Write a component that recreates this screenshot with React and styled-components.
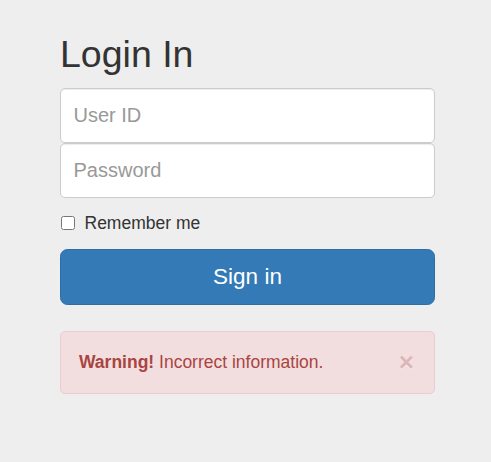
import React from "react";
import styled, { createGlobalStyle } from "styled-components";

const Global = createGlobalStyle`
  html, body {
    margin: 0;
    padding: 0;
    background: #eeeeee;
  }
  body {
    font-family: "Liberation Sans", Arial, Helvetica, sans-serif;
    color: #333333;
  }
  * { box-sizing: border-box; }
`;

const Page = styled.div`
  min-height: 462px;
  padding: 34px 0 0 60px;
`;

const Form = styled.form`
  width: 375px;
  display: flex;
  flex-direction: column;
`;

const Heading = styled.h2`
  margin: 0 0 13px;
  font-size: 37.5px;
  line-height: 41px;
  font-weight: 500;
  color: #333333;
`;

const Input = styled.input`
  display: block;
  width: 100%;
  height: 55px;
  margin: 0;
  padding: 0 12.5px;
  font-family: inherit;
  font-size: 20px;
  color: #555555;
  background: #ffffff;
  border: 1px solid #cccccc;
  border-radius: 5px;
  box-shadow: inset 0 1px 1px rgba(0, 0, 0, 0.075);
  outline: none;
  &::placeholder {
    color: #999999;
  }
`;

const CheckRow = styled.label`
  display: flex;
  align-items: center;
  gap: 10px;
  margin: 12.5px 0 13.5px;
  height: 25px;
  font-size: 17.5px;
  line-height: 25px;
  color: #333333;
`;

const Check = styled.input`
  width: 14px;
  height: 14px;
  margin: 0 0 0 0.5px;
`;

const Button = styled.button`
  display: block;
  width: 100%;
  height: 56px;
  margin: 0;
  padding: 0;
  font-family: inherit;
  font-size: 22.5px;
  color: #ffffff;
  background: #337ab7;
  border: 1px solid #2e6da4;
  border-radius: 7.5px;
  cursor: pointer;
`;

const Alert = styled.div`
  margin-top: 26px;
  height: 63px;
  display: flex;
  align-items: center;
  justify-content: space-between;
  padding: 0 18px 0 18px;
  background: #f2dede;
  border: 1px solid #ebccd1;
  border-radius: 5px;
  color: #a94442;
  font-size: 17.5px;
  line-height: 25px;
`;

const AlertText = styled.span`
  strong { font-weight: 700; }
`;

const Close = styled.button`
  margin: 0 2px 2px 0;
  padding: 0;
  border: 0;
  background: transparent;
  font-family: inherit;
  font-size: 26px;
  font-weight: 700;
  line-height: 1;
  color: #dcb6b8;
  text-shadow: 0 1px 0 rgba(255, 255, 255, 0.5);
  cursor: pointer;
`;

export default function App() {
  return (
    <>
      <Global />
      <Page>
        <Form onSubmit={(e) => e.preventDefault()}>
          <Heading>Login In</Heading>
          <Input type="text" placeholder="User ID" />
          <Input type="password" placeholder="Password" />
          <CheckRow>
            <Check type="checkbox" />
            Remember me
          </CheckRow>
          <Button type="submit">Sign in</Button>
          <Alert>
            <AlertText>
              <strong>Warning!</strong> Incorrect information.
            </AlertText>
            <Close type="button">×</Close>
          </Alert>
        </Form>
      </Page>
    </>
  );
}
